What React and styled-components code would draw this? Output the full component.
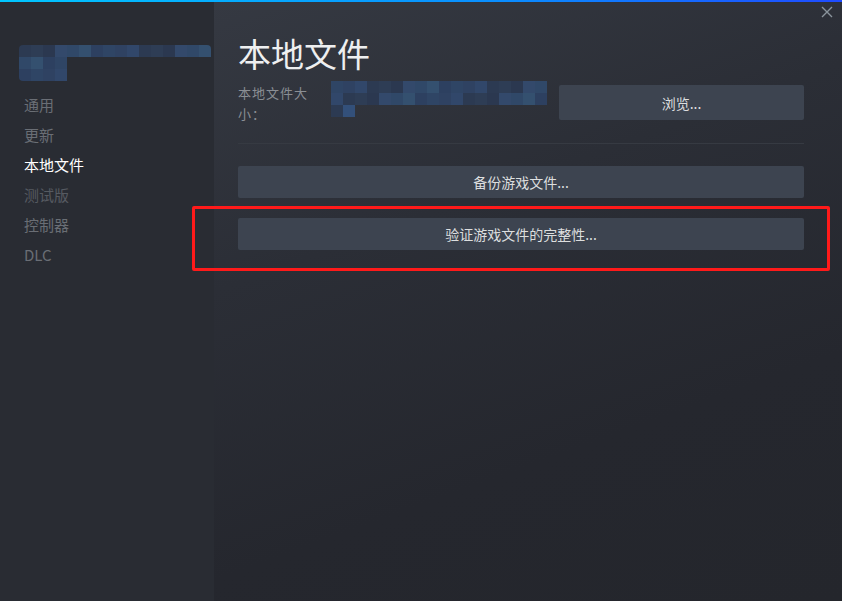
import React from 'react';
import styled, { createGlobalStyle } from 'styled-components';

const GlobalStyle = createGlobalStyle`
  html, body {
    margin: 0;
    padding: 0;
    height: 601px;
    overflow: hidden;
    background: #292c33;
  }
  * {
    box-sizing: border-box;
  }
`;

const Window = styled.div`
  width: 842px;
  height: 601px;
  display: flex;
  flex-direction: column;
  font-family: "Noto Sans CJK SC", "Noto Sans", sans-serif;
  position: relative;
`;

const TopLine = styled.div`
  height: 2px;
  flex-shrink: 0;
  background: linear-gradient(90deg, #00c6ff 0%, #0a8dff 60%, #1f4bff 100%);
`;

const Body = styled.div`
  flex: 1;
  display: flex;
`;

const Sidebar = styled.div`
  width: 214px;
  flex-shrink: 0;
  background: #292c33;
  padding: 43px 0 0 19px;
`;

const NavList = styled.div`
  margin-top: 9px;
  display: flex;
  flex-direction: column;
`;

const NavItem = styled.div`
  padding-left: 5px;
  font-size: 15px;
  line-height: 30px;
  height: 30px;
  color: ${(p) => (p.active ? '#ffffff' : p.dim ? '#565a61' : '#6a6e75')};
`;

const Main = styled.div`
  flex: 1;
  background: linear-gradient(160deg, #353942 0%, #2b2e36 35%, #25272e 70%, #24262c 100%);
  padding: 28px 38px 0 24px;
`;

const Title = styled.h1`
  margin: 0;
  font-size: 33px;
  font-weight: 400;
  line-height: 46px;
  color: #eeeff0;
`;

const SizeRow = styled.div`
  display: flex;
  align-items: flex-start;
  margin-top: 5px;
  height: 56px;
`;

const SizeLabel = styled.div`
  width: 78px;
  margin-right: 15px;
  font-size: 13px;
  letter-spacing: 1px;
  line-height: 21px;
  color: #8a8e94;
  padding-top: 1px;
`;

const SizeValue = styled.div`
  flex: 1;
  height: 48px;
`;

const Button = styled.button`
  display: flex;
  align-items: center;
  justify-content: center;
  width: ${(p) => p.width || '100%'};
  height: ${(p) => p.height || '32px'};
  border: none;
  border-radius: 2px;
  background: #3d4450;
  color: #dcdedf;
  font-family: inherit;
  font-size: 14px;
  cursor: pointer;
  padding: 0;
`;

const BrowseButton = styled(Button)`
  margin-top: 4px;
  flex-shrink: 0;
`;

const Divider = styled.div`
  height: 1px;
  background: #363a42;
  margin-top: 6px;
`;

const Actions = styled.div`
  display: flex;
  flex-direction: column;
  gap: 20px;
  margin-top: 22px;
`;

const Highlight = styled.div`
  position: relative;
`;

const RedBox = styled.div`
  position: absolute;
  top: -12px;
  left: -46px;
  right: -26px;
  bottom: -21px;
  border: 3px solid #ff1a1a;
  border-radius: 2px;
  pointer-events: none;
`;

const CloseButton = styled.div`
  position: absolute;
  top: 6px;
  right: 9px;
  width: 12px;
  height: 12px;
  display: flex;
`;

const palette = ['#2e3d55', '#304868', '#2f4565', '#2c3a52', '#33496b', '#2d4060', '#31476a', '#2b3850', '#34506f', '#2f4262'];

const Pixelated = ({ rows, cell = 12, radius = 0 }) => {
  const cols = Math.max(...rows.map((r) => r.length));
  const w = cols * cell;
  const h = rows.length * cell;
  return (
    <svg width={w} height={h} style={{ display: 'block' }}>
      <defs>
        <clipPath id={`clip-${w}-${h}`}>
          <rect width={w} height={h} rx={radius} />
        </clipPath>
      </defs>
      <g clipPath={`url(#clip-${w}-${h})`}>
        {rows.map((row, y) =>
          row.map((c, x) =>
            c == null ? null : (
              <rect key={`${x}-${y}`} x={x * cell} y={y * cell} width={cell} height={cell} fill={c} />
            )
          )
        )}
      </g>
    </svg>
  );
};

const seq = (n, offset) => Array.from({ length: n }, (_, i) => palette[(i * 7 + offset) % palette.length]);

const titleRows = [
  seq(16, 3),
  [...seq(4, 1)],
  [...seq(4, 5)],
];

const valueRows = [
  seq(18, 2),
  seq(18, 6),
  [palette[3], '#33507a'],
];

const navItems = [
  { label: '通用' },
  { label: '更新' },
  { label: '本地文件', active: true },
  { label: '测试版', dim: true },
  { label: '控制器' },
  { label: 'DLC' },
];

export default function App() {
  return (
    <Window>
      <GlobalStyle />
      <TopLine />
      <Body>
        <Sidebar>
          <Pixelated rows={titleRows} radius={4} />
          <NavList>
            {navItems.map((item) => (
              <NavItem key={item.label} active={item.active} dim={item.dim}>
                {item.label}
              </NavItem>
            ))}
          </NavList>
        </Sidebar>
        <Main>
          <Title>本地文件</Title>
          <SizeRow>
            <SizeLabel>本地文件大小：</SizeLabel>
            <SizeValue>
              <Pixelated rows={valueRows} />
            </SizeValue>
            <BrowseButton width="245px" height="35px">浏览...</BrowseButton>
          </SizeRow>
          <Divider />
          <Actions>
            <Button>备份游戏文件...</Button>
            <Highlight>
              <Button>验证游戏文件的完整性...</Button>
              <RedBox />
            </Highlight>
          </Actions>
        </Main>
      </Body>
      <CloseButton>
        <svg width="12" height="12" viewBox="0 0 12 12">
          <path d="M1 1 L11 11 M11 1 L1 11" stroke="#8a949c" strokeWidth="1.4" />
        </svg>
      </CloseButton>
    </Window>
  );
}
